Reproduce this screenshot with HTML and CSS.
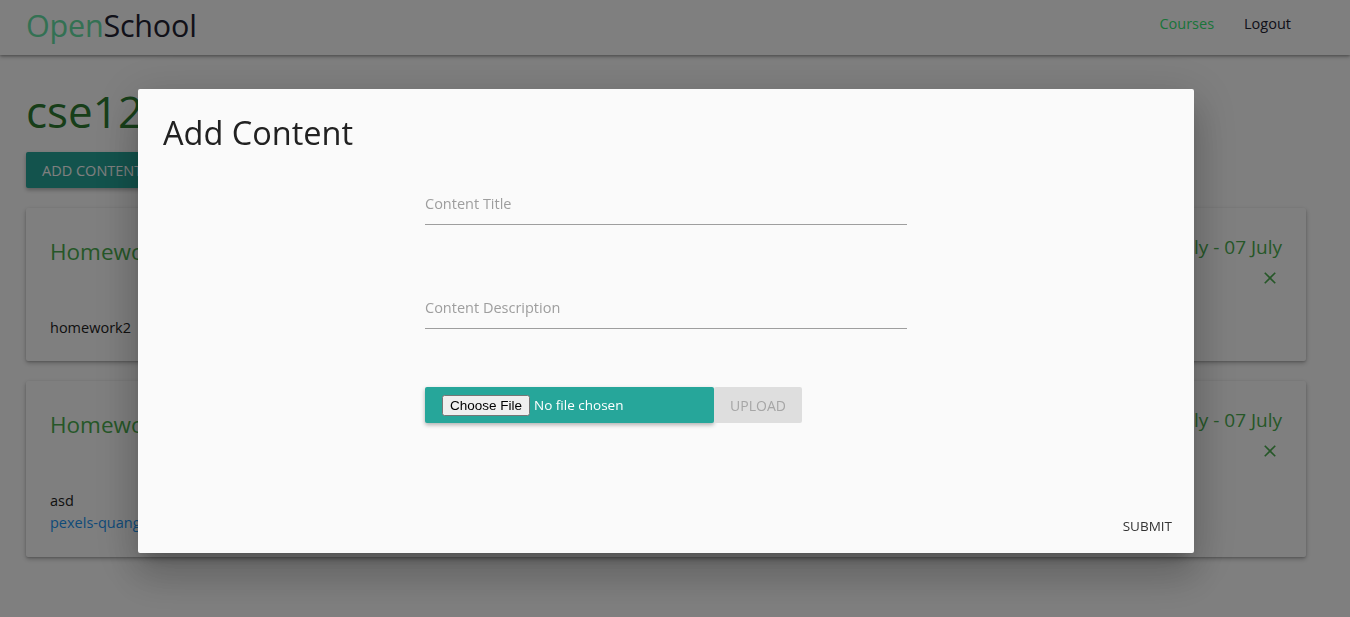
FILE: index.html
```html
<!DOCTYPE html>
<html>
<head>
<meta charset="utf-8">
<link rel="stylesheet" href="styles.css">
</head>
<body>
<header class="navbar">
  <div class="logo"><span class="logo-open">Open</span>School</div>
  <nav class="nav-links">
    <a class="nav-link active">Courses</a>
    <a class="nav-link">Logout</a>
  </nav>
</header>
<main class="page">
  <h1 class="course-title">cse1234 - Software Engineering</h1>
  <button class="btn-add">ADD CONTENT</button>
  <section class="card card-1">
    <div class="card-head">
      <h2 class="card-title">Homework 2</h2>
      <div class="card-side">
        <div class="card-date">01 July - 07 July</div>
        <svg class="close-icon" viewBox="0 0 24 24" width="20" height="20"><path d="M19 6.41L17.59 5 12 10.59 6.41 5 5 6.41 10.59 12 5 17.59 6.41 19 12 13.41 17.59 19 19 17.59 13.41 12z"/></svg>
      </div>
    </div>
    <p class="card-text">homework2</p>
  </section>
  <section class="card card-2">
    <div class="card-head">
      <h2 class="card-title">Homework 1</h2>
      <div class="card-side">
        <div class="card-date">01 July - 07 July</div>
        <svg class="close-icon" viewBox="0 0 24 24" width="20" height="20"><path d="M19 6.41L17.59 5 12 10.59 6.41 5 5 6.41 10.59 12 5 17.59 6.41 19 12 13.41 17.59 19 19 17.59 13.41 12z"/></svg>
      </div>
    </div>
    <p class="card-text">asd</p>
    <a class="card-link">pexels-quang-nguyen-vinh.jpg</a>
  </section>
</main>

<div class="overlay">
  <div class="modal">
    <h2 class="modal-title">Add Content</h2>
    <form class="modal-form">
      <div class="field">
        <input class="field-input" type="text" placeholder="Content Title">
      </div>
      <div class="field">
        <input class="field-input" type="text" placeholder="Content Description">
      </div>
      <div class="upload-row">
        <div class="file-box"><input class="file-input" type="file"></div>
        <button type="button" class="btn-upload">UPLOAD</button>
      </div>
    </form>
    <div class="modal-actions">
      <button type="button" class="btn-submit">SUBMIT</button>
    </div>
  </div>
</div>
</body>
</html>
```

FILE: styles.css
```css
* { box-sizing: border-box; }
html, body { margin: 0; padding: 0; }
body {
  font-family: "Open Sans", "Noto Sans", sans-serif;
  background: #ffffff;
  color: #222;
  width: 1350px;
  height: 617px;
  overflow: hidden;
}
.navbar {
  height: 55px;
  display: flex;
  align-items: center;
  justify-content: space-between;
  padding: 0 59px 0 26px;
  background: #fff;
  box-shadow: 0 2px 4px rgba(0,0,0,0.25), 0 1px 2px rgba(0,0,0,0.2);
}
.logo {
  font-size: 30.5px;
  color: #222233;
  letter-spacing: -0.2px;
  margin-top: -6px;
}
.logo-open { color: #66e2a6; }
.nav-links { display: flex; gap: 30px; margin-top: -8px; }
.nav-link { font-size: 14.5px; color: #222233; }
.nav-link.active { color: #36e874; }
.page {
  padding: 30px 44px 0 26px;
}
.course-title {
  margin: 0;
  font-weight: 400;
  font-size: 44px;
  line-height: 52px;
  color: #2e7d32;
  white-space: nowrap;
}
.btn-add {
  margin-top: 15px;
  height: 36px;
  padding: 0 16px;
  border: none;
  border-radius: 2px;
  background: #26a69a;
  color: #fff;
  font-family: inherit;
  font-size: 14.5px;
  box-shadow: 0 2px 4px rgba(0,0,0,0.3);
}
.card {
  margin-top: 20px;
  background: #fff;
  border-radius: 2px;
  padding: 20px 24px 20px 24px;
  box-shadow: 0 2px 5px rgba(0,0,0,0.25), 0 1px 2px rgba(0,0,0,0.15);
}
.card-1 { height: 153px; }
.card-2 { height: 176px; }
.card-head { display: flex; justify-content: space-between; }
.card-title {
  margin: 8px 0 0;
  font-weight: 400;
  font-size: 22.5px;
  color: #4caf50;
}
.card-side { display: flex; flex-direction: column; align-items: flex-end; }
.card-date { font-size: 19px; color: #4caf50; margin-top: 6px; }
.close-icon { fill: #4caf50; margin-top: 8px; margin-right: 2px; }
.card-text { margin: 30px 0 0; font-size: 14.5px; color: #222; }
.card-link { display: block; font-size: 14.5px; color: #2196f3; margin-top: 3px; }

.overlay {
  position: fixed;
  inset: 0;
  background: rgba(0,0,0,0.5);
}
.modal {
  position: absolute;
  left: 138px;
  top: 89px;
  width: 1056px;
  height: 464px;
  background: #fafafa;
  border-radius: 2px;
  padding: 24px 24px 18px 24px;
  display: flex;
  flex-direction: column;
  box-shadow: 0 11px 15px -7px rgba(0,0,0,0.2), 0 24px 38px 3px rgba(0,0,0,0.14), 0 9px 46px 8px rgba(0,0,0,0.12);
}
.modal-title {
  margin: 0;
  padding-left: 1px;
  font-weight: 400;
  font-size: 32.5px;
  line-height: 40px;
  color: #212121;
}
.modal-form {
  width: 482px;
  margin: 34px auto 0;
  display: flex;
  flex-direction: column;
}
.field { height: 104px; }
.field-input {
  display: block;
  width: 100%;
  height: 38px;
  border: none;
  border-bottom: 1px solid #9e9e9e;
  background: transparent;
  padding: 4px 0 9px;
  font-family: inherit;
  font-size: 14.5px;
  line-height: 24px;
  outline: none;
}
.field-input::placeholder { color: #9e9e9e; }
.upload-row { display: flex; margin-top: -8px; }
.file-box {
  width: 289px;
  height: 36px;
  background: #26a69a;
  border-radius: 2px;
  padding: 0 0 0 17px;
  display: flex;
  align-items: center;
  box-shadow: 0 2px 4px rgba(0,0,0,0.3);
}
.file-input {
  color: #fff;
  font-family: inherit;
  font-size: 13.5px;
}
.btn-upload {
  width: 88px;
  height: 36px;
  border: none;
  background: #dedede;
  color: #a6a6a6;
  font-family: inherit;
  font-size: 14px;
  border-radius: 2px;
}
.modal-actions { margin-top: auto; margin-right: -2px; display: flex; justify-content: flex-end; }
.btn-submit {
  border: none;
  background: transparent;
  font-family: inherit;
  font-size: 13.5px;
  color: #333;
  padding: 0;
}
```
